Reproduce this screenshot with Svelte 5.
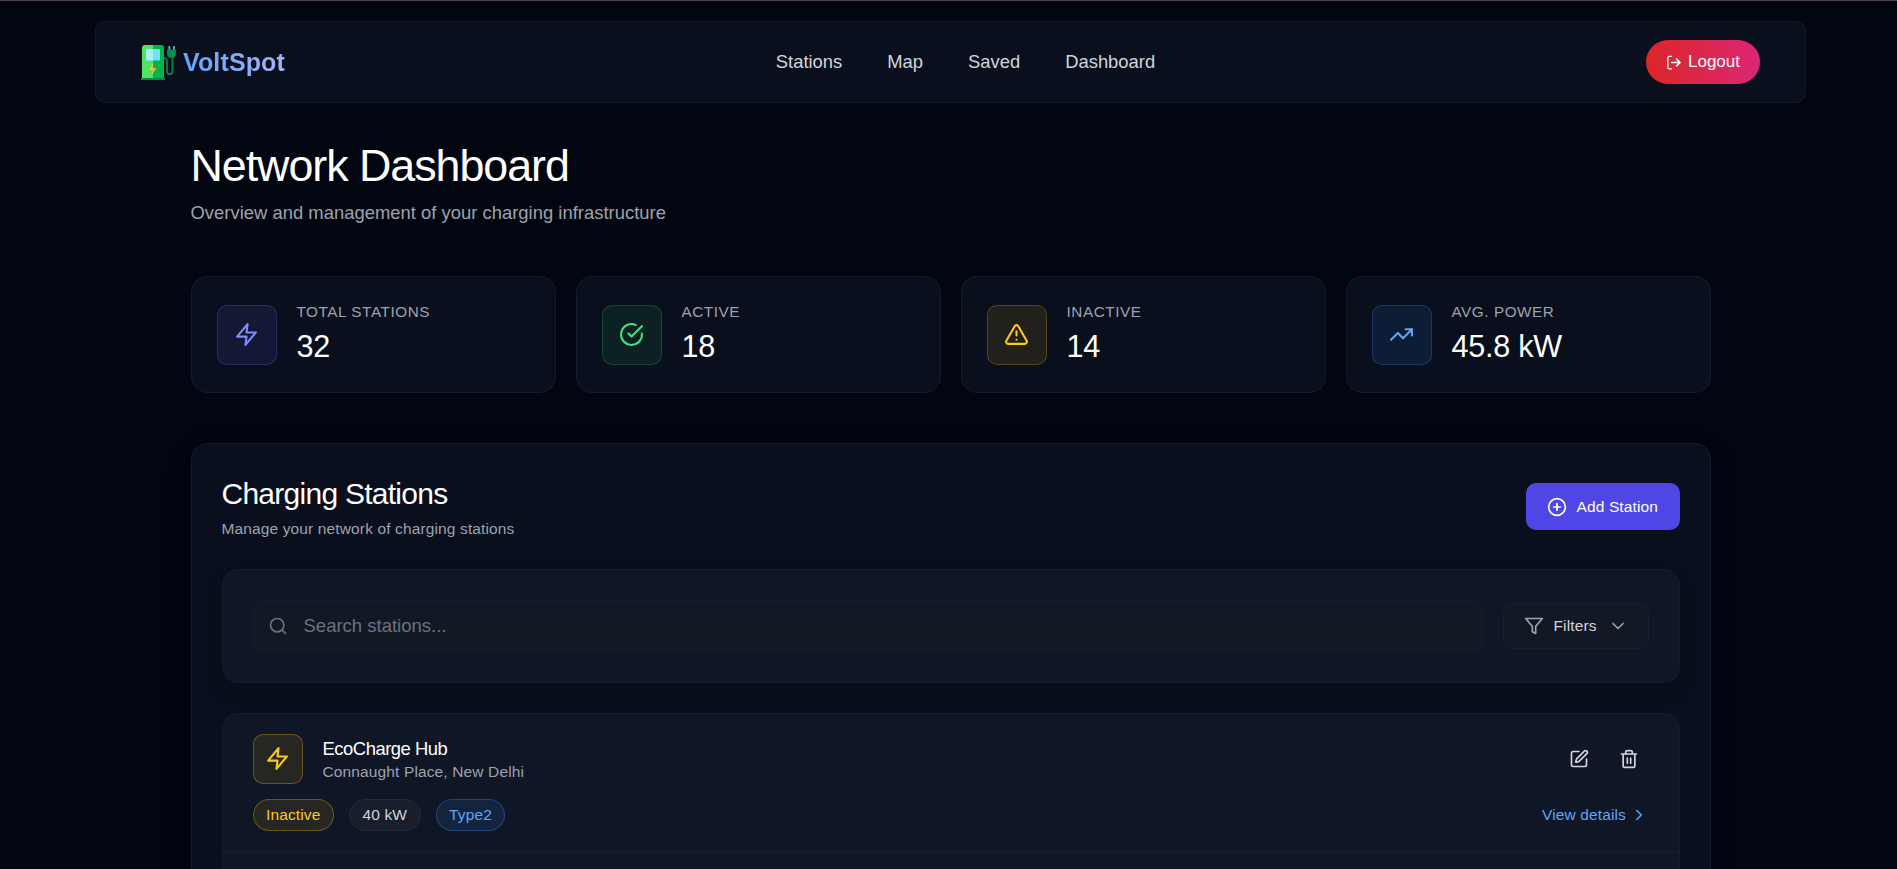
<script lang="ts">
	const links = ['Stations', 'Map', 'Saved', 'Dashboard'];

	const stats = [
		{ label: 'Total Stations', value: '32', icon: 'zap', tone: 'indigo' },
		{ label: 'Active', value: '18', icon: 'check', tone: 'green' },
		{ label: 'Inactive', value: '14', icon: 'alert', tone: 'yellow' },
		{ label: 'Avg. Power', value: '45.8 kW', icon: 'trend', tone: 'blue' }
	];

	const stations = [
		{
			name: 'EcoCharge Hub',
			location: 'Connaught Place, New Delhi',
			status: 'Inactive',
			power: '40 kW',
			connector: 'Type2'
		}
	];

	let search = $state('');
</script>

{#snippet icon(name: string, size: number)}
	<svg
		class="icon"
		width={size}
		height={size}
		viewBox="0 0 24 24"
		fill="none"
		stroke="currentColor"
		stroke-width="2"
		stroke-linecap="round"
		stroke-linejoin="round"
	>
		{#if name === 'zap'}
			<polygon points="13 2 3 14 12 14 11 22 21 10 12 10 13 2" />
		{:else if name === 'check'}
			<path d="M22 11.08V12a10 10 0 1 1-5.93-9.14" />
			<polyline points="22 4 12 14.01 9 11.01" />
		{:else if name === 'alert'}
			<path d="m21.73 18-8-14a2 2 0 0 0-3.48 0l-8 14A2 2 0 0 0 4 21h16a2 2 0 0 0 1.73-3z" />
			<path d="M12 9v4M12 17h.01" />
		{:else if name === 'trend'}
			<polyline points="22 7 13.5 15.5 8.5 10.5 2 17" />
			<polyline points="16 7 22 7 22 13" />
		{:else if name === 'plus'}
			<circle cx="12" cy="12" r="10" />
			<path d="M12 8v8M8 12h8" />
		{:else if name === 'search'}
			<circle cx="11" cy="11" r="8" />
			<path d="m21 21-4.3-4.3" />
		{:else if name === 'filter'}
			<polygon points="22 3 2 3 10 12.46 10 19 14 21 14 12.46 22 3" />
		{:else if name === 'down'}
			<path d="m6 9 6 6 6-6" />
		{:else if name === 'right'}
			<path d="m9 18 6-6-6-6" />
		{:else if name === 'edit'}
			<path d="M12 3H5a2 2 0 0 0-2 2v14a2 2 0 0 0 2 2h14a2 2 0 0 0 2-2v-7" />
			<path
				d="M18.375 2.625a1 1 0 0 1 3 3l-9.013 9.014a2 2 0 0 1-.853.505l-2.873.84a.5.5 0 0 1-.62-.62l.84-2.873a2 2 0 0 1 .506-.852z"
			/>
		{:else if name === 'trash'}
			<path d="M3 6h18M19 6v14a2 2 0 0 1-2 2H7a2 2 0 0 1-2-2V6" />
			<path d="M8 6V4a2 2 0 0 1 2-2h4a2 2 0 0 1 2 2v2M10 11v6M14 11v6" />
		{:else if name === 'logout'}
			<path d="M9 2H5a2 2 0 0 0-2 2v16a2 2 0 0 0 2 2h4" />
			<path d="M9 12h13M17 6.5l5.5 5.5-5.5 5.5" stroke-width="2.6" />
		{/if}
	</svg>
{/snippet}

<div class="page">
	<header class="navbar">
		<a class="brand" href="#home">
			<svg width="35" height="35" viewBox="0 0 35 35">
				<path
					d="M22.5 13c3.2 0 3.5 1.5 3.5 4v9.500a2.700 2.700 0 0 0 5.400 0V12"
					fill="none"
					stroke="#008247"
					stroke-width="1.9"
				/>
				<path d="M1 33V3a3 3 0 0 1 3-3h8v33z" fill="#54e360" />
				<path d="M12 0h8a3 3 0 0 1 3 3v30H12z" fill="#00b44e" />
				<rect x="5" y="4" width="14" height="11.5" rx="1" fill="#73e1f5" />
				<path d="M6 4h6v11.500H6a1 1 0 0 1-1-1V5a1 1 0 0 1 1-1z" fill="#aaedfb" />
				<path d="M0 33h24v2H0z" fill="#008a4b" />
				<path d="M12 18.500 8.500 25h3.500l-1.500 5 5-7H12z" fill="#fdc72e" />
				<path d="M12 27.500 10.500 30l5-7H12z" fill="#fea832" />
				<path d="M28.300 1v4M33 1v4" stroke="#8ea4b4" stroke-width="1.7" />
				<path d="M26 4.500h9v4c0 2.500-1.500 4.500-3.500 4.500h-2c-2 0-3.500-2-3.500-4.500z" fill="#008a4b" />
			</svg>
			<span class="brand-name">VoltSpot</span>
		</a>
		<nav class="links">
			{#each links as link}
				<a href="#{link.toLowerCase()}">{link}</a>
			{/each}
		</nav>
		<button class="logout">
			{@render icon('logout', 15)}
			Logout
		</button>
	</header>

	<main class="content">
		<h1>Network Dashboard</h1>
		<p class="subtitle">Overview and management of your charging infrastructure</p>

		<section class="stats">
			{#each stats as stat}
				<div class="stat-card">
					<div class="stat-icon {stat.tone}">{@render icon(stat.icon, 25)}</div>
					<div>
						<p class="stat-label">{stat.label}</p>
						<p class="stat-value">{stat.value}</p>
					</div>
				</div>
			{/each}
		</section>

		<section class="panel">
			<div class="panel-header">
				<div>
					<h2>Charging Stations</h2>
					<p class="panel-text">Manage your network of charging stations</p>
				</div>
				<button class="add">
					{@render icon('plus', 20)}
					Add Station
				</button>
			</div>

			<div class="toolbar">
				<label class="search">
					{@render icon('search', 20)}
					<input type="text" placeholder="Search stations..." bind:value={search} />
				</label>
				<button class="filters">
					{@render icon('filter', 20)}
					<span>Filters</span>
					{@render icon('down', 20)}
				</button>
			</div>

			<div class="list">
				{#each stations as station}
					<article class="station">
						<div class="station-row">
							<div class="station-info">
								<div class="station-icon yellow">{@render icon('zap', 25)}</div>
								<div>
									<h3>{station.name}</h3>
									<p class="location">{station.location}</p>
								</div>
							</div>
							<div class="actions">
								<button aria-label="Edit">{@render icon('edit', 20)}</button>
								<button aria-label="Delete">{@render icon('trash', 20)}</button>
							</div>
						</div>
						<div class="station-row">
							<div class="tags">
								<span class="tag yellow">{station.status}</span>
								<span class="tag power">{station.power}</span>
								<span class="tag blue">{station.connector}</span>
							</div>
							<a class="details" href="#details">
								View details
								{@render icon('right', 18)}
							</a>
						</div>
					</article>
				{/each}
			</div>
		</section>
	</main>
</div>

<style>
	:global(body) {
		background: #020610;
		overflow: hidden;
	}

	.page {
		box-sizing: border-box;
		width: 1901px;
		height: 869px;
		overflow: hidden;
		border-top: 1px solid #4d454b;
		padding-top: 20px;
		background: #020610;
		color: #fff;
		font-family: Arial, 'Liberation Sans', sans-serif;
		font-size: 15.5px;
		letter-spacing: 0.13px;
	}

	.page * {
		box-sizing: border-box;
	}

	h1,
	h2,
	h3,
	p {
		margin: 0;
		font-weight: 400;
	}

	a {
		color: inherit;
		text-decoration: none;
	}

	button {
		border: none;
		background: none;
		color: inherit;
		font: inherit;
		letter-spacing: inherit;
		cursor: pointer;
	}

	.icon {
		display: block;
		flex-shrink: 0;
	}

	.navbar {
		display: flex;
		align-items: center;
		justify-content: space-between;
		width: 1711px;
		height: 82px;
		margin: 0 auto;
		padding: 0 45px;
		border: 1px solid #121825;
		border-radius: 10px;
		background: #090f1c;
	}

	.brand {
		display: flex;
		align-items: center;
		gap: 7px;
	}

	.brand-name {
		font-size: 25px;
		font-weight: 700;
		background: linear-gradient(90deg, #60a5fa, #a5b4fc);
		background-clip: text;
		-webkit-background-clip: text;
		color: transparent;
	}

	.links {
		display: flex;
		gap: 45px;
		font-size: 18.4px;
		letter-spacing: 0;
		color: #d1d5db;
	}

	.logout {
		display: flex;
		align-items: center;
		gap: 7px;
		width: 114px;
		height: 44px;
		padding: 0 0 0 20px;
		border-radius: 22px;
		background: linear-gradient(90deg, #dc2626, #db2777);
		font-size: 17px;
		letter-spacing: 0;
	}

	.content {
		width: 1520px;
		margin: 0 auto;
		padding-top: 35px;
	}

	h1 {
		font-size: 44.8px;
		line-height: 54px;
		letter-spacing: -1.03px;
	}

	.subtitle {
		margin: 7px 0 49px;
		font-size: 18.4px;
		line-height: 28px;
		letter-spacing: 0.02px;
		color: #9ca3af;
	}

	.stats {
		display: grid;
		grid-template-columns: repeat(4, 1fr);
		gap: 20px;
		margin-bottom: 50px;
	}

	.stat-card {
		display: flex;
		align-items: center;
		gap: 20px;
		height: 117px;
		padding: 0 25px;
		border: 1px solid #151b28;
		border-radius: 16px;
		background: #090f1c;
	}

	.stat-icon,
	.station-icon {
		display: grid;
		place-items: center;
		width: 60px;
		height: 60px;
		border: 1px solid;
		border-radius: 10px;
	}

	.station-icon {
		width: 50px;
		height: 50px;
	}

	.tag {
		display: flex;
		align-items: center;
		height: 32px;
		padding: 0 12.5px;
		border: 1px solid;
		border-radius: 16px;
	}

	.indigo {
		color: #818cf8;
		background: rgba(99, 102, 241, 0.12);
		border-color: rgba(99, 102, 241, 0.25);
	}

	.green {
		color: #4ade80;
		background: rgba(34, 197, 94, 0.1);
		border-color: rgba(34, 197, 94, 0.25);
	}

	.yellow {
		color: #facc15;
		background: rgba(250, 190, 21, 0.1);
		border-color: rgba(234, 179, 8, 0.25);
	}

	.blue {
		color: #60a5fa;
		background: rgba(59, 130, 246, 0.12);
		border-color: rgba(59, 130, 246, 0.25);
	}

	.station-icon.yellow,
	.tag.yellow {
		border-color: rgba(234, 179, 8, 0.35);
	}

	.tag.blue {
		border-color: rgba(59, 130, 246, 0.35);
	}

	.tag.power {
		color: #d1d5db;
		background: #181e2b;
		border-color: #242a37;
	}

	.stat-label {
		margin-bottom: 4.5px;
		line-height: 19.7px;
		font-size: 15.3px;
		letter-spacing: 0.55px;
		text-transform: uppercase;
		color: #9ca3af;
	}

	.stat-value {
		font-size: 30.6px;
		line-height: 40.8px;
		letter-spacing: -0.25px;
	}

	.panel {
		height: 700px;
		padding: 30px;
		border: 1px solid #151b29;
		border-radius: 16px;
		background: #090f1c;
		box-shadow: 0 8px 32px rgba(0, 0, 0, 0.08);
	}

	.panel-header {
		display: flex;
		align-items: center;
		justify-content: space-between;
		margin-bottom: 30px;
	}

	h2 {
		margin-bottom: 4.7px;
		font-size: 30px;
		line-height: 39px;
		letter-spacing: -0.74px;
	}

	.panel-text {
		line-height: 21.6px;
		color: #9ca3af;
	}

	.add {
		display: flex;
		align-items: center;
		gap: 10px;
		width: 154px;
		height: 47px;
		padding: 0 0 0 21px;
		border-radius: 10px;
		background: #4f46e5;
	}

	.toolbar {
		display: flex;
		align-items: center;
		gap: 20px;
		margin-bottom: 30px;
		padding: 30px;
		border: 1px solid #161d2b;
		border-radius: 16px;
		background: #0f1625;
		box-shadow: 0 10px 20px -4px rgba(12, 4, 8, 0.25);
	}

	.search {
		display: flex;
		flex: 1;
		align-items: center;
		gap: 16px;
		height: 51.4px;
		padding: 0 14px;
		border: 1px solid #171e2a;
		border-radius: 10px;
		background: #121925;
		color: #6b7280;
	}

	.search input {
		flex: 1;
		padding: 1px 0 0;
		border: none;
		outline: none;
		background: none;
		color: #fff;
		font: inherit;
		font-size: 18.5px;
	}

	.search input::placeholder {
		color: #6b7280;
	}

	.filters {
		display: flex;
		align-items: center;
		gap: 10px;
		width: 146px;
		height: 46.4px;
		padding: 0 20px;
		border: 1px solid #16202b;
		border-radius: 10px;
		background: #121925;
		color: #9ca3af;
	}

	.filters span {
		margin-right: auto;
		color: #d1d5db;
	}

	.list {
		height: 400px;
		border: 1px solid #161d2b;
		border-radius: 16px;
		background: #0f1625;
	}

	.station {
		display: flex;
		flex-direction: column;
		gap: 15px;
		padding: 20px 30px;
		border-bottom: 1px solid #181f2d;
	}

	.station-row,
	.station-info {
		display: flex;
		align-items: center;
	}

	.station-row {
		justify-content: space-between;
	}

	.station-info {
		gap: 20px;
	}

	h3 {
		font-size: 18.4px;
		line-height: 27px;
		letter-spacing: -0.46px;
	}

	.location {
		line-height: 19.8px;
		color: #9ca3af;
	}

	.actions {
		display: flex;
		gap: 10px;
		color: #d1d5db;
	}

	.actions button {
		display: grid;
		place-items: center;
		width: 40px;
		height: 40px;
		padding: 0;
	}

	.tags {
		display: flex;
		gap: 15px;
	}

	.details {
		display: flex;
		align-items: center;
		gap: 4px;
		padding-right: 0.5px;
		color: #60a5fa;
	}
</style>
